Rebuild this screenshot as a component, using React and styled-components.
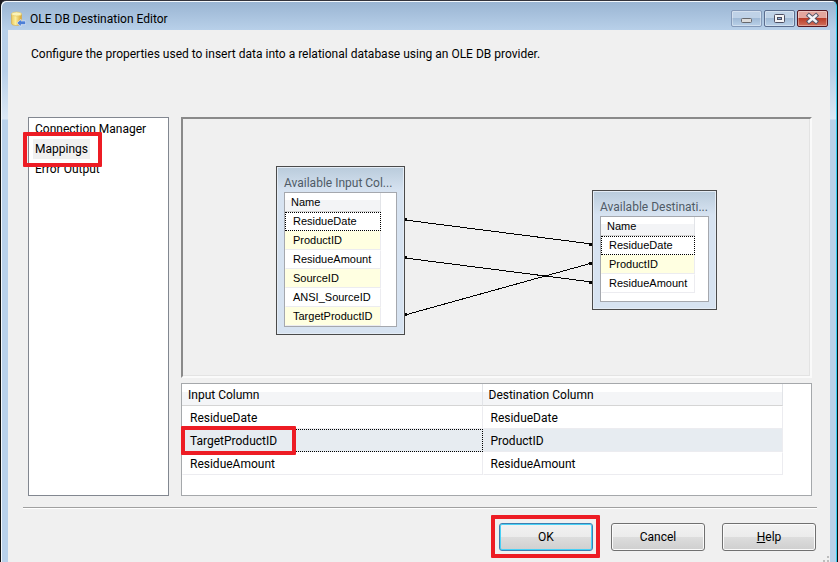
import { useState } from 'react';
import styled, { createGlobalStyle } from 'styled-components';

const pages = ['Connection Manager', 'Mappings', 'Error Output'];

const inputColumns = ['ResidueDate', 'ProductID', 'ResidueAmount', 'SourceID', 'ANSI_SourceID', 'TargetProductID'];

const destinationColumns = ['ResidueDate', 'ProductID', 'ResidueAmount'];

const mappings = [
  { input: 'ResidueDate', destination: 'ResidueDate' },
  { input: 'TargetProductID', destination: 'ProductID' },
  { input: 'ResidueAmount', destination: 'ResidueAmount' },
];

const ColumnNode = ({ title, columns, side }) => (
  <Node $side={side}>
    <NodeTitle>{title}</NodeTitle>
    <NodeList>
      <NodeTable>
        <thead>
          <tr>
            <NodeHead scope="col">Name</NodeHead>
          </tr>
        </thead>
        <tbody>
          {columns.map((column, i) => (
            <tr key={column}>
              <NodeCell $alt={i % 2 === 1} $focused={i === 0}>{column}</NodeCell>
            </tr>
          ))}
        </tbody>
      </NodeTable>
    </NodeList>
  </Node>
);

const App = () => {
  const [page, setPage] = useState('Mappings');

  return (
    <>
      <GlobalStyle />
      <Window>
        <TitleBar>
          <DatabaseIcon />
          <Title>OLE DB Destination Editor</Title>
          <Controls>
            <Control type="button" aria-label="Minimize" $kind="min">
              <svg width="29" height="15" aria-hidden="true">
                <rect x="9.5" y="7.5" width="10" height="4" rx="1" fill="#dcdcdc" stroke="#66686c" />
              </svg>
            </Control>
            <Control type="button" aria-label="Maximize" $kind="max">
              <svg width="29" height="15" aria-hidden="true">
                <rect x="9.5" y="3.5" width="10" height="8" rx="1" fill="#f4f4f6" stroke="#4c4e62" />
                <rect x="12.5" y="6.5" width="4" height="2" fill="#8fb0d8" stroke="#4c4e62" />
              </svg>
            </Control>
            <Control type="button" aria-label="Close" $kind="close">
              <svg width="29" height="15" aria-hidden="true">
                <path d="M11 4.5l7 6M18 4.5l-7 6" stroke="#53566a" strokeWidth="4.4" strokeLinecap="square" />
                <path d="M11 4.5l7 6M18 4.5l-7 6" stroke="#f4f4f6" strokeWidth="2.4" strokeLinecap="square" />
              </svg>
            </Control>
          </Controls>
        </TitleBar>

        <Body>
          <Description>
            Configure the properties used to insert data into a relational database using an OLE DB provider.
          </Description>

          <Panels>
            <PageList aria-label="Pages">
              {pages.map((name) => (
                <PageItem key={name} type="button" $active={name === page} onClick={() => setPage(name)}>
                  {name}
                  {name === 'Mappings' && <Marker $inset="-7px -12px -8px -10px" />}
                </PageItem>
              ))}
            </PageList>

            <Work>
              <Canvas>
                <Links width="187" height="100" aria-hidden="true">
                  <g stroke="#000" shapeRendering="crispEdges">
                    <path d="M0 7L187 31M0 45L187 69M0 102L187 50" />
                  </g>
                  <path d="M0 5h2v3H0zM0 43h2v3H0zM0 100h2v3H0zM184 30h3v3h-3zM184 49h3v3h-3zM184 68h3v3h-3z" />
                </Links>
                <ColumnNode title="Available Input Col..." columns={inputColumns} side="input" />
                <ColumnNode title="Available Destinati..." columns={destinationColumns} side="destination" />
              </Canvas>

              <Grid>
                <MappingTable>
                  <thead>
                    <tr>
                      <MappingHead scope="col">Input Column</MappingHead>
                      <MappingHead scope="col">Destination Column</MappingHead>
                    </tr>
                  </thead>
                  <tbody>
                    {mappings.map(({ input, destination }) => {
                      const selected = input === 'TargetProductID';
                      return (
                        <tr key={input}>
                          <MappingCell $selected={selected} $focused={selected}>
                            {input}
                            {selected && <Marker $inset="-4px 186px -4px -2px" />}
                          </MappingCell>
                          <MappingCell $selected={selected}>{destination}</MappingCell>
                        </tr>
                      );
                    })}
                  </tbody>
                </MappingTable>
              </Grid>
            </Work>
          </Panels>

          <Divider />

          <Footer>
            <DialogButton type="button" $primary>
              OK
              <Marker $inset="-9px -8px -8px -9px" />
            </DialogButton>
            <DialogButton type="button">Cancel</DialogButton>
            <DialogButton type="button"><u>H</u>elp</DialogButton>
          </Footer>

          <Grip width="6" height="6" aria-hidden="true">
            <path d="M4 0h2v2H4zM0 4h2v2H0zM4 4h2v2H4z" fill="#bdbdbd" />
          </Grip>
        </Body>
      </Window>
    </>
  );
};

export default App;

const DatabaseIcon = () => (
  <svg width="15" height="17" viewBox="0 0 15 17" aria-hidden="true">
    <defs>
      <linearGradient id="cylinder">
        <stop offset="0" stopColor="#ecca5c" />
        <stop offset="0.4" stopColor="#fbee9e" />
        <stop offset="1" stopColor="#dba730" />
      </linearGradient>
    </defs>
    <path d="M0.5 4v9.5c0 1.2 2.2 2 5 2s5-.8 5-2V4z" fill="url(#cylinder)" stroke="#d3ab48" strokeWidth="0.6" />
    <ellipse cx="5.5" cy="4" rx="5" ry="2" fill="#fbf3b8" stroke="#e2c35c" strokeWidth="0.6" />
    <path d="M6 13l4-3.8V11h4.6v3.6H10v2z" fill="#4c7fd6" stroke="#e6eefb" strokeWidth="0.6" />
  </svg>
);

// GENERAL STYLES //
//
const GlobalStyle = createGlobalStyle`
  * {
    box-sizing: border-box;
  }

  body {
    margin: 0;
    background: #1c1a20;
    color: #000;
    font: 12px/18px Roboto, 'Liberation Sans', sans-serif;
  }

  button {
    font: inherit;
    color: inherit;
  }
`;

const Window = styled.div`
  display: flex;
  flex-direction: column;
  min-height: 100vh;
  padding: 1px 7px 0;
  border: 1px solid #111;
  border-top-color: #33333c;
  border-bottom: 0;
  border-radius: 6px 6px 0 0;
  background: linear-gradient(#99b4d2 0, #b8d0e9 29px, #b8cfe8 70px, #dce8f5 118px, #b9d1ea 119px);
  box-shadow: inset 1px 1px #f4f8fc, inset -1px 0 #35cdf0;
`;

const TitleBar = styled.header`
  display: flex;
  height: 28px;
  padding: 8px 2px 0 3px;
`;

const Title = styled.h1`
  flex: 1;
  margin: 0 0 0 4px;
  font-size: 12px;
  font-weight: 400;
  line-height: 18px;
`;

const Controls = styled.div`
  display: flex;
  gap: 2px;
`;

const controlBorders = { min: '#8499b8', max: '#5b6d8e', close: '#561620' };

const Control = styled.button`
  width: 31px;
  height: 17px;
  padding: 0;
  border: 1px solid ${({ $kind }) => controlBorders[$kind]};
  border-radius: 2px;
  background: ${({ $kind }) =>
    $kind === 'close'
      ? 'linear-gradient(#e3a69d 0 7px, #b93a25 7px, #d0705c)'
      : 'linear-gradient(#bfd2e7 0 7px, #9fb9d5 7px, #b9d0e8)'};
  box-shadow: inset 0 0 0 1px rgba(255, 255, 255, 0.35);

  svg {
    display: block;
  }
`;

const Body = styled.main`
  position: relative;
  display: flex;
  flex: 1;
  flex-direction: column;
  padding: 15px 13px 11px 15px;
  background: #f0f0f0;
`;

const Description = styled.p`
  margin: 0 8px 54px;
`;

const Panels = styled.div`
  display: flex;
  flex: 1;
  gap: 12px;
  padding: 0 5px;
`;

const PageList = styled.nav`
  display: flex;
  flex: none;
  flex-direction: column;
  align-items: flex-start;
  width: 141px;
  padding: 1px 4px;
  border: 1px solid #828790;
  background: #fff;
`;

const PageItem = styled.button`
  position: relative;
  height: 20px;
  padding: 0 2px;
  border: 0;
  background: ${({ $active }) => ($active ? '#f0f0f0' : 'none')};
`;

// red frame laid over the control it points out
const Marker = styled.span`
  position: absolute;
  inset: ${({ $inset }) => $inset};
  z-index: 1;
  border: 4px solid #ed1c24;
  border-radius: 1px;
  pointer-events: none;
`;

const Work = styled.div`
  display: flex;
  flex: 1;
  flex-direction: column;
  gap: 5px;
  min-width: 0;
`;

// MAPPING DIAGRAM //
//
const Canvas = styled.section`
  position: relative;
  flex: 1;
  min-height: 240px;
  border: 2px solid;
  border-color: #8a8a8a #fafafa #fafafa #8a8a8a;
  box-shadow: inset -1px -1px #e3e3e3;
  overflow: hidden;
`;

const Links = styled.svg`
  position: absolute;
  top: 94px;
  left: 222px;
  overflow: visible;
`;

const Node = styled.div`
  position: absolute;
  top: ${({ $side }) => ($side === 'input' ? '47px' : '71px')};
  left: ${({ $side }) => ($side === 'input' ? '93px' : '409px')};
  width: ${({ $side }) => ($side === 'input' ? '129px' : '125px')};
  padding: 7px;
  border: 1px solid #4a4a4a;
  background: linear-gradient(#b9cbdb, #d7e3f1 24px);
  box-shadow: inset 0 0 0 1px #e4ecf5;
`;

const NodeTitle = styled.h2`
  margin: 0;
  color: #4f5b66;
  font-size: 12px;
  font-weight: 400;
  line-height: 18px;
  white-space: nowrap;
`;

const NodeList = styled.div`
  min-height: 86px;
  padding-right: 15px;
  border: 1px solid #a5a8ae;
  background: #fff;
`;

const NodeTable = styled.table`
  width: 100%;
  border-spacing: 0;
  font: 11px/17px 'Liberation Sans', Arial, sans-serif;
`;

const NodeHead = styled.th`
  height: 19px;
  padding: 1px 6px 0;
  border-right: 1px solid #e2e4e8;
  border-bottom: 1px solid #d5d5d5;
  background: linear-gradient(#fff 40%, #f3f4f6 40%);
  font-weight: 400;
  text-align: left;
`;

const NodeCell = styled.td`
  height: 19px;
  padding: 0 7px;
  border: 1px solid transparent;
  border-right-color: #ececf0;
  border-bottom-color: #ececf0;
  background: ${({ $alt }) => ($alt ? '#ffffe1' : '#fff')};
  ${({ $focused }) => $focused && 'border: 1px dotted #000;'}
`;

// MAPPING TABLE //
//
const Grid = styled.div`
  height: 113px;
  border: 1px solid #a5a8ab;
  background: #fff;
`;

const MappingTable = styled.table`
  width: calc(100% - 28px);
  border-spacing: 0;
  table-layout: fixed;
`;

const MappingHead = styled.th`
  height: 22px;
  padding: 1px 6px 0;
  border-right: 1px solid #e2e4e8;
  border-bottom: 1px solid #d5d5d5;
  background: linear-gradient(#fff 40%, #f4f5f7 40%);
  font-weight: 400;
  text-align: left;
`;

const MappingCell = styled.td`
  position: relative;
  height: 23px;
  padding: 0 7px;
  border: 1px solid transparent;
  border-right-color: #ececf0;
  border-bottom-color: #ececf0;
  background: ${({ $selected }) => ($selected ? '#e7ecf1' : '#fff')};
  ${({ $focused }) => $focused && 'border: 1px dotted #000;'}
`;

// FOOTER //
//
const Divider = styled.hr`
  width: 100%;
  height: 2px;
  margin: 11px 0 14px;
  border: 0;
  border-top: 1px solid #a0a0a0;
  background: #fff;
`;

const Footer = styled.footer`
  display: flex;
  justify-content: flex-end;
  gap: 17px;
  padding-right: 1px;
`;

const DialogButton = styled.button`
  position: relative;
  width: 94px;
  height: 28px;
  padding: 0;
  border: 1px solid ${({ $primary }) => ($primary ? '#3c7fb1' : '#707070')};
  border-radius: 3px;
  background: linear-gradient(#f2f2f2, #ebebeb 50%, #dddddd 50%, #cfcfcf);
  box-shadow: inset 0 0 0 1px ${({ $primary }) => ($primary ? '#48d0f5' : '#fbfbfb')};

  &:first-child {
    margin-right: 1px;
  }
`;

const Grip = styled.svg`
  position: absolute;
  right: 1px;
  bottom: 0;
`;
